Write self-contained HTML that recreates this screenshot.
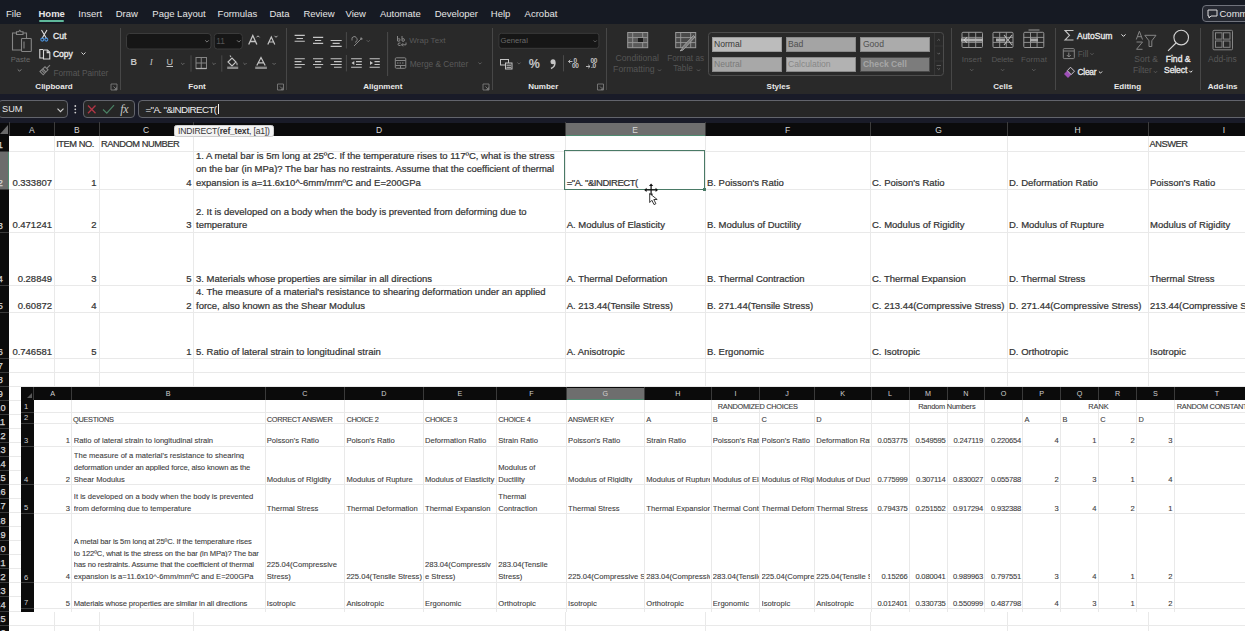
<!DOCTYPE html><html><head><meta charset="utf-8"><style>
html,body{margin:0;padding:0}
body{width:1245px;height:631px;overflow:hidden;position:relative;background:#fff;font-family:"Liberation Sans", sans-serif}
div{box-sizing:border-box}
.t{position:absolute;white-space:nowrap;line-height:1}
.s{-webkit-text-stroke:0.22px currentColor}
.si{-webkit-text-stroke:0.1px currentColor}
</style></head><body>
<div style="position:absolute;left:0px;top:0px;width:1245px;height:24px;background:#161a23"></div>
<div class="t" style="left:6px;top:8.8px;width:15.8px;font-size:9.5px;color:#e6e6e6;font-weight:normal">File</div>
<div class="t" style="left:38.5px;top:8.8px;width:27.5px;font-size:9.5px;color:#e6e6e6;font-weight:bold">Home</div>
<div class="t" style="left:78.3px;top:8.8px;width:24.400000000000006px;font-size:9.5px;color:#e6e6e6;font-weight:normal">Insert</div>
<div class="t" style="left:115.7px;top:8.8px;width:22.89999999999999px;font-size:9.5px;color:#e6e6e6;font-weight:normal">Draw</div>
<div class="t" style="left:152.3px;top:8.8px;width:51.69999999999999px;font-size:9.5px;color:#e6e6e6;font-weight:normal">Page Layout</div>
<div class="t" style="left:217.6px;top:8.8px;width:38.900000000000006px;font-size:9.5px;color:#e6e6e6;font-weight:normal">Formulas</div>
<div class="t" style="left:269.4px;top:8.8px;width:20.80000000000001px;font-size:9.5px;color:#e6e6e6;font-weight:normal">Data</div>
<div class="t" style="left:303.4px;top:8.8px;width:29.900000000000034px;font-size:9.5px;color:#e6e6e6;font-weight:normal">Review</div>
<div class="t" style="left:345.5px;top:8.8px;width:20.80000000000001px;font-size:9.5px;color:#e6e6e6;font-weight:normal">View</div>
<div class="t" style="left:380px;top:8.8px;width:40.80000000000001px;font-size:9.5px;color:#e6e6e6;font-weight:normal">Automate</div>
<div class="t" style="left:434.7px;top:8.8px;width:43.69999999999999px;font-size:9.5px;color:#e6e6e6;font-weight:normal">Developer</div>
<div class="t" style="left:490.8px;top:8.8px;width:20.599999999999966px;font-size:9.5px;color:#e6e6e6;font-weight:normal">Help</div>
<div class="t" style="left:524.6px;top:8.8px;width:34.39999999999998px;font-size:9.5px;color:#e6e6e6;font-weight:normal">Acrobat</div>
<div style="position:absolute;left:38.5px;top:20.3px;width:25.5px;height:1.6px;background:#5fb89a;border-radius:1px"></div>
<div style="position:absolute;left:1202px;top:5px;width:60px;height:17px;background:#262932;border:1px solid #70737c;border-radius:4px"></div>
<svg style="position:absolute;left:1207px;top:9px" width="11" height="10" viewBox="0 0 11 10"><path d="M1 1h9v6H4L2 9V7H1z" fill="none" stroke="#ddd" stroke-width="1"/></svg>
<div class="t" style="left:1219.5px;top:8.5px;font-size:9.5px;color:#e6e6e6;font-weight:normal;">Comm</div>
<div style="position:absolute;left:0px;top:24px;width:1245px;height:70px;background:#292929"></div>
<div style="position:absolute;left:119.5px;top:28px;width:1px;height:62px;background:#474747"></div>
<div style="position:absolute;left:285.8px;top:28px;width:1px;height:62px;background:#474747"></div>
<div style="position:absolute;left:492px;top:28px;width:1px;height:62px;background:#474747"></div>
<div style="position:absolute;left:605.6px;top:28px;width:1px;height:62px;background:#474747"></div>
<div style="position:absolute;left:950.6px;top:28px;width:1px;height:62px;background:#474747"></div>
<div style="position:absolute;left:1054.6px;top:28px;width:1px;height:62px;background:#474747"></div>
<div style="position:absolute;left:1200.4px;top:28px;width:1px;height:62px;background:#474747"></div>
<div class="t" style="left:26.200000000000003px;top:83px;width:55.7px;text-align:center;font-size:8px;color:#e8e8e8;font-weight:bold">Clipboard</div>
<div class="t" style="left:178.7px;top:83px;width:36.70000000000002px;text-align:center;font-size:8px;color:#e8e8e8;font-weight:bold">Font</div>
<div class="t" style="left:354.3px;top:83px;width:57.099999999999966px;text-align:center;font-size:8px;color:#e8e8e8;font-weight:bold">Alignment</div>
<div class="t" style="left:519px;top:83px;width:48.60000000000002px;text-align:center;font-size:8px;color:#e8e8e8;font-weight:bold">Number</div>
<div class="t" style="left:757.9px;top:83px;width:40.89999999999998px;text-align:center;font-size:8px;color:#e8e8e8;font-weight:bold">Styles</div>
<div class="t" style="left:984.4px;top:83px;width:36.89999999999998px;text-align:center;font-size:8px;color:#e8e8e8;font-weight:bold">Cells</div>
<div class="t" style="left:1104.9px;top:83px;width:45.299999999999955px;text-align:center;font-size:8px;color:#e8e8e8;font-weight:bold">Editing</div>
<div class="t" style="left:1198.8px;top:83px;width:47.799999999999955px;text-align:center;font-size:8px;color:#e8e8e8;font-weight:bold">Add-ins</div>
<svg style="position:absolute;left:0;top:0" width="1245" height="94" viewBox="0 0 1245 94"><g fill="none" stroke="#858585" stroke-width="1.1"><path d="M16.5 33H12.5V50H21"/><path d="M23 33H26.5V38"/><path d="M16.5 34.5V31.8H18.5L19.8 30.3L21.1 31.8H23V34.5Z"/><rect x="21.5" y="38.5" width="9.8" height="13" rx="0.8"/><path d="M24 41.5V48.5"/></g><path d="M17.7 69.39999999999999L19.5 71.2L21.3 69.39999999999999" fill="none" stroke="#858585" stroke-width="1"/><g fill="none" stroke-width="1.1"><path d="M41.5 30L46.5 38.5M47 30L42 38.5" stroke="#dcdcdc"/><circle cx="42.3" cy="39.6" r="1.5" stroke="#4a8fd6"/><circle cx="46.3" cy="39.6" r="1.5" stroke="#4a8fd6"/></g><g fill="none" stroke="#d8d8d8" stroke-width="1.1"><path d="M43 49.5H39.8V58H43"/><path d="M43.5 50H47.5L49.8 52.3V59H43.5Z"/><path d="M47.2 50.2V52.6H49.6"/></g><path d="M81.5 52.5L83.5 54.5L85.5 52.5" fill="none" stroke="#d8d8d8" stroke-width="1"/><g fill="none" stroke="#858585" stroke-width="1.1"><path d="M40 71.5L45 66.8L48 69.8L43.2 74.8Z"/><path d="M46.8 68.3L50 65.2"/><path d="M41.5 70.2L44.5 73.2M42.8 69L45.8 72"/></g><g fill="none" stroke="#7a7a7a" stroke-width="0.9"><path d="M111 84H117V90H111Z"/><path d="M113.5 86.5L116.5 89.5M116.5 87.3V89.5H114.3"/></g><g fill="none" stroke="#7a7a7a" stroke-width="0.9"><path d="M277.5 84H283.5V90H277.5Z"/><path d="M280.0 86.5L283.0 89.5M283.0 87.3V89.5H280.8"/></g><g fill="none" stroke="#7a7a7a" stroke-width="0.9"><path d="M483 84H489V90H483Z"/><path d="M485.5 86.5L488.5 89.5M488.5 87.3V89.5H486.3"/></g><g fill="none" stroke="#7a7a7a" stroke-width="0.9"><path d="M597.5 84H603.5V90H597.5Z"/><path d="M600.0 86.5L603.0 89.5M603.0 87.3V89.5H600.8"/></g><rect x="126.5" y="33.5" width="84.5" height="15.5" rx="3" fill="#161616" stroke="#3b3b3b" stroke-width="1"/><path d="M205.2 40.300000000000004L207 42.1L208.8 40.300000000000004" fill="none" stroke="#7a7a7a" stroke-width="1"/><rect x="214.3" y="33.5" width="28" height="15.5" rx="3" fill="#161616" stroke="#3b3b3b" stroke-width="1"/><path d="M237.0 40.300000000000004L238.8 42.1L240.60000000000002 40.300000000000004" fill="none" stroke="#7a7a7a" stroke-width="1"/><g fill="none" stroke="#c4c4c4" stroke-width="1.3"><path d="M248.7 44.5L252.8 35.6L256.9 44.5M250.2 41.5H255.4"/></g><path d="M256.5 37.3L258 35.8L259.5 37.3" fill="none" stroke="#c4c4c4" stroke-width="0.9"/><g fill="none" stroke="#c4c4c4" stroke-width="1.2"><path d="M267.8 44.5L271.3 37L274.8 44.5M269.1 42H273.5"/></g><path d="M274.5 35.8L276 37.3L277.5 35.8" fill="none" stroke="#c4c4c4" stroke-width="0.9"/><path d="M191 55.3V71.7M221.8 55.3V71.7" stroke="#4a4a4a" stroke-width="1"/><path d="M181.20000000000002 63.0L182.8 64.6L184.4 63.0" fill="none" stroke="#6a6a6a" stroke-width="1"/><g fill="none" stroke="#858585" stroke-width="1"><rect x="196" y="57.5" width="10.5" height="11"/><path d="M201.25 57.5V68.5M196 63H206.5"/></g><path d="M196 68.5H206.5" stroke="#b0b0b0" stroke-width="1.3"/><path d="M212.4 63.0L214 64.6L215.6 63.0" fill="none" stroke="#6a6a6a" stroke-width="1"/><g fill="none" stroke="#c4c4c4" stroke-width="1.1"><path d="M228 62L232 58L236 62L232 66Z"/><path d="M231 57L230 55.5"/><path d="M236.5 62.5Q237.8 64.5 236.8 65.3"/></g><rect x="227.2" y="66.6" width="11" height="2.4" fill="#8a8a8a"/><path d="M243.4 63.0L245 64.6L246.6 63.0" fill="none" stroke="#6a6a6a" stroke-width="1"/><g fill="none" stroke="#c4c4c4" stroke-width="1.2"><path d="M256.8 65.5L261 57.5L265.2 65.5M258.3 62.8H263.7"/></g><rect x="255.2" y="66.6" width="11.7" height="2.4" fill="#8a8a8a"/><path d="M272.5 63.0L274.1 64.6L275.70000000000005 63.0" fill="none" stroke="#6a6a6a" stroke-width="1"/><path d="M294.6 35.4H304.8 M296.5 38.5H303 M294.6 41.3H304.8" stroke="#c4c4c4" stroke-width="1.1" fill="none"/><path d="M313 37.4H323.2 M315 40.5H321.2 M313 43.4H323.2" stroke="#c4c4c4" stroke-width="1.1" fill="none"/><path d="M330.6 40.5H341.7 M332.6 43.4H339.7 M330.6 46.4H341.7" stroke="#c4c4c4" stroke-width="1.1" fill="none"/><path d="M346.4 32.1V48.5M346.4 55V71.4" stroke="#4a4a4a" stroke-width="1"/><g fill="none" stroke="#858585" stroke-width="1"><path d="M352 40.5Q351 37 354 36.5Q356 36 356.5 38.5M355 42.5Q358 41 357.2 38.5"/><path d="M354 46L362 38M362 38L360 38.3M362 38L361.7 40"/></g><path d="M366.7 40.2L368.3 41.8L369.90000000000003 40.2" fill="none" stroke="#5c5c5c" stroke-width="1"/><path d="M294.6 58.7H304.8 M294.6 61.6H301.5 M294.6 64.5H304.8 M294.6 67.3H301.5" stroke="#c4c4c4" stroke-width="1.1" fill="none"/><path d="M313 58.7H323.2 M315 61.6H321.2 M313 64.5H323.2 M315 67.3H321.2" stroke="#c4c4c4" stroke-width="1.1" fill="none"/><path d="M330.6 58.7H341.7 M334 61.6H341.7 M330.6 64.5H341.7 M334 67.3H341.7" stroke="#c4c4c4" stroke-width="1.1" fill="none"/><path d="M351.1 58.7H361.8 M351.1 67.3H361.8" stroke="#c4c4c4" stroke-width="1.1" fill="none"/><path d="M356 61.6H361.8 M356 64.5H361.8" stroke="#c4c4c4" stroke-width="1.1" fill="none"/><path d="M351.5 63L354.3 61V65Z" fill="#c4c4c4"/><path d="M369.6 58.7H379.8 M369.6 67.3H379.8" stroke="#c4c4c4" stroke-width="1.1" fill="none"/><path d="M374.5 61.6H379.8 M374.5 64.5H379.8" stroke="#c4c4c4" stroke-width="1.1" fill="none"/><path d="M373 63L370 61V65Z" fill="#c4c4c4"/><g fill="none" stroke="#858585" stroke-width="1"><path d="M397.5 36V41M397.5 39.5Q400 37.5 400 40Q400 42 397.5 41"/><path d="M402 36V41M402 39Q404.5 37.8 404.5 40Q404.5 42 402 41"/><path d="M400.5 43Q398 42.5 398 44.2Q398 46 400.5 45.5"/><path d="M401.5 44.8H406V42.5M401.5 44.8L403 43.3M401.5 44.8L403 46.3"/></g><g fill="none" stroke="#858585" stroke-width="1"><rect x="395.3" y="57.8" width="10.5" height="10.5" rx="1"/><path d="M395.3 60.5H405.8M395.3 65.5H405.8M400.5 65.5V68.3"/><path d="M397 63H404" stroke-dasharray="1.5 1"/></g><path d="M478.4 62.5L480 64.1L481.6 62.5" fill="none" stroke="#5c5c5c" stroke-width="1"/><path d="M387.6 32V76" stroke="#4a4a4a" stroke-width="1"/><rect x="498.9" y="33.3" width="100" height="15" rx="2.5" fill="#161616" stroke="#3b3b3b" stroke-width="1"/><path d="M593.6 40.400000000000006L595.2 42.0L596.8000000000001 40.400000000000006" fill="none" stroke="#5c5c5c" stroke-width="1"/><g fill="none" stroke="#c4c4c4" stroke-width="1"><rect x="500.5" y="59.5" width="8" height="5.5"/><rect x="505.5" y="63" width="6.5" height="6" fill="#292929"/><path d="M506.5 65.2H511M506.5 67.3H511"/></g><path d="M517.4 62.5L519 64.1L520.6 62.5" fill="none" stroke="#5c5c5c" stroke-width="1"/><path d="M563.5 55.2V71.4" stroke="#4a4a4a" stroke-width="1"/><path d="M568.5 61.5H572.5M568.5 61.5L570.3 59.8M568.5 61.5L570.3 63.2" fill="none" stroke="#c4c4c4" stroke-width="0.9"/><path d="M586 66.5H590M590 66.5L588.2 64.8M590 66.5L588.2 68.2" fill="none" stroke="#c4c4c4" stroke-width="0.9"/><rect x="628" y="32.6" width="19.5" height="15" fill="#5a5a5a"/><rect x="627.7" y="32.5" width="20" height="15.2" fill="none" stroke="#9a9a9a" stroke-width="1"/><path d="M627.7 37.6H647.7" stroke="#9a9a9a" stroke-width="0.9"/><path d="M627.7 42.6H647.7" stroke="#9a9a9a" stroke-width="0.9"/><path d="M632.7 32.5V47.7M642.7 32.5V47.7" stroke="#9a9a9a" stroke-width="0.9"/><rect x="638" y="38" width="5" height="4" fill="#1c1c1c"/><rect x="676" y="32.6" width="19.5" height="15" fill="#4a4a4a"/><rect x="675.7" y="32.5" width="20" height="15.2" fill="none" stroke="#9a9a9a" stroke-width="1"/><path d="M675.7 37.6H695.7" stroke="#9a9a9a" stroke-width="0.9"/><path d="M675.7 42.6H695.7" stroke="#9a9a9a" stroke-width="0.9"/><path d="M680.7 32.5V47.7M690.7 32.5V47.7" stroke="#9a9a9a" stroke-width="0.9"/><path d="M695 37L684.5 48.5Q683 51 680 50.8Q682.5 49 683 46.5L693.5 35.5Z" fill="#7a7a7a" stroke="#aaaaaa" stroke-width="0.8"/><path d="M658.0 69.55L659.5 71.05L661.0 69.55" fill="none" stroke="#5c5c5c" stroke-width="1"/><path d="M697.0 69.55L698.5 71.05L700.0 69.55" fill="none" stroke="#5c5c5c" stroke-width="1"/><rect x="708.5" y="32.5" width="235" height="43" rx="3" fill="none" stroke="#4c4c4c" stroke-width="1"/><path d="M934.5 33V75M934.5 46H943M934.5 61H943" stroke="#3a3a3a" stroke-width="0.8"/><path d="M937.4 40.6L938.7 39.3L940 40.6" fill="none" stroke="#666" stroke-width="0.9"/><path d="M937.4000000000001 52.85L938.7 54.15L940.0 52.85" fill="none" stroke="#666" stroke-width="1"/><path d="M936.5 65.5H941" stroke="#666" stroke-width="0.8"/><path d="M937.4000000000001 68.35L938.7 69.65L940.0 68.35" fill="none" stroke="#666" stroke-width="1"/><rect x="962" y="32.3" width="20.5" height="15.2" rx="1" fill="none" stroke="#9a9a9a" stroke-width="1"/><path d="M962 37.4H982.5" stroke="#9a9a9a" stroke-width="0.9"/><path d="M962 42.4H982.5" stroke="#9a9a9a" stroke-width="0.9"/><path d="M968.8 32.3V47.5" stroke="#9a9a9a" stroke-width="0.9"/><path d="M975.7 32.3V47.5" stroke="#9a9a9a" stroke-width="0.9"/><path d="M961 40H983" stroke="#b0b0b0" stroke-width="3"/><path d="M964 40L967 37.5M964 40L967 42.5" stroke="#d0d0d0" stroke-width="1" fill="none"/><rect x="993" y="32.3" width="20" height="15.2" rx="1" fill="none" stroke="#9a9a9a" stroke-width="1"/><path d="M993 37.4H1013" stroke="#9a9a9a" stroke-width="0.9"/><path d="M993 42.4H1013" stroke="#9a9a9a" stroke-width="0.9"/><path d="M999.7 32.3V47.5" stroke="#9a9a9a" stroke-width="0.9"/><path d="M1006.3 32.3V47.5" stroke="#9a9a9a" stroke-width="0.9"/><path d="M996 40H1005" stroke="#aaa" stroke-width="3"/><path d="M1004 35L1012 45M1012 35L1004 45" stroke="#b8b8b8" stroke-width="1.1"/><rect x="1023.8" y="32.3" width="20" height="15.2" rx="1" fill="none" stroke="#9a9a9a" stroke-width="1"/><path d="M1023.8 37.4H1043.8" stroke="#9a9a9a" stroke-width="0.9"/><path d="M1023.8 42.4H1043.8" stroke="#9a9a9a" stroke-width="0.9"/><path d="M1030.5 32.3V47.5" stroke="#9a9a9a" stroke-width="0.9"/><path d="M1037.1 32.3V47.5" stroke="#9a9a9a" stroke-width="0.9"/><path d="M1030 40H1038" stroke="#aaa" stroke-width="3"/><path d="M1028.5 30H1039.5" stroke="#9a9a9a" stroke-width="1"/><path d="M970.1 69.2L971.7 70.8L973.3000000000001 69.2" fill="none" stroke="#5c5c5c" stroke-width="1"/><path d="M1001.0 69.2L1002.6 70.8L1004.2 69.2" fill="none" stroke="#5c5c5c" stroke-width="1"/><path d="M1032.2 69.2L1033.8 70.8L1035.3999999999999 69.2" fill="none" stroke="#5c5c5c" stroke-width="1"/><path d="M1073.5 30.5H1065L1069.5 35.3L1065 40H1073.5" fill="none" stroke="#c4c4c4" stroke-width="1.1"/><path d="M1121.5 34.4L1123.5 36.4L1125.5 34.4" fill="none" stroke="#ececec" stroke-width="1"/><g fill="none" stroke="#858585" stroke-width="1"><rect x="1063.3" y="48.6" width="11" height="10" rx="0.8"/><path d="M1063.3 51H1074.3M1068.8 52.5V57M1066.8 55L1068.8 57L1070.8 55"/></g><path d="M1090.5 53.25L1092 54.75L1093.5 53.25" fill="none" stroke="#5c5c5c" stroke-width="1"/><path d="M1064 74L1070.5 67.2L1074.5 71.2L1068 78Z" fill="#9c4fb6"/><path d="M1067.3 70.6L1070.5 67.2L1074.5 71.2L1071.2 74.6Z" fill="#2e2e2e" stroke="#d0d0d0" stroke-width="0.9"/><path d="M1098.9 71.5L1100.5 73.1L1102.1 71.5" fill="none" stroke="#ececec" stroke-width="1"/><g fill="none" stroke="#858585" stroke-width="1"><path d="M1136.3 39.5L1139.4 31.2L1142.5 39.5M1137.4 36.7H1141.4"/><path d="M1136.5 42H1142.5L1136.5 49.3H1142.5"/><path d="M1144.8 35.3H1156L1151.8 40.8V46.5H1149V40.8Z"/></g><path d="M1154.0 71.25L1155.5 72.75L1157.0 71.25" fill="none" stroke="#5c5c5c" stroke-width="1"/><g fill="none" stroke="#d4d4d4" stroke-width="1.1"><circle cx="1181.2" cy="37.6" r="7.3"/><path d="M1176 43L1168 50.8"/></g><path d="M1189.2 70.7L1190.8 72.3L1192.3999999999999 70.7" fill="none" stroke="#ececec" stroke-width="1"/><g fill="none" stroke="#858585" stroke-width="1"><rect x="1213" y="30.3" width="19.5" height="19.5" rx="1"/><rect x="1215.5" y="32.8" width="6.5" height="6.3"/><rect x="1223.5" y="32.8" width="6.5" height="6.3"/><rect x="1215.5" y="41" width="6.5" height="6.3"/><rect x="1223.5" y="41" width="6.5" height="6.3"/></g></svg>
<div class="t" style="left:10.7px;top:56.17px;font-size:7.6px;color:#6a6a6a;font-weight:normal;">Paste</div>
<div class="t" style="left:53px;top:31.92px;font-size:8.6px;color:#ececec;font-weight:normal;-webkit-text-stroke:0.3px #ececec">Cut</div>
<div class="t" style="left:53px;top:49.72px;font-size:8.6px;color:#ececec;font-weight:normal;-webkit-text-stroke:0.3px #ececec;letter-spacing:-0.1px">Copy</div>
<div class="t" style="left:53.4px;top:68.57px;font-size:8.3px;color:#585858;font-weight:normal;">Format Painter</div>
<div class="t" style="left:216.3px;top:37.27px;font-size:8.3px;color:#555;font-weight:normal;">11</div>
<div class="t" style="left:130.5px;top:58px;font-size:9px;color:#c4c4c4;font-weight:bold">B</div>
<div class="t" style="left:149.8px;top:58px;font-size:9px;color:#c4c4c4;font-style:italic;font-family:'Liberation Serif', serif">I</div>
<div class="t" style="left:166.5px;top:58px;font-size:9px;color:#c4c4c4;text-decoration:underline">U</div>
<div class="t" style="left:409.3px;top:37.34px;font-size:8.1px;color:#5a5a5a;font-weight:normal;">Wrap Text</div>
<div class="t" style="left:409.7px;top:59.57px;font-size:8.3px;color:#5a5a5a;font-weight:normal;">Merge &amp; Center</div>
<div class="t" style="left:500.5px;top:37.38px;font-size:7.7px;color:#6a6a6a;font-weight:normal;">General</div>
<div class="t" style="left:528.8px;top:57.8px;font-size:12.5px;color:#c4c4c4;font-weight:bold;letter-spacing:-0.5px">%</div>
<div class="t" style="left:573.5px;top:57.5px;font-size:6.5px;color:#c4c4c4;font-weight:bold">0</div>
<div class="t" style="left:572px;top:63.3px;font-size:6.5px;color:#c4c4c4;font-weight:bold;letter-spacing:-0.3px">00</div>
<div class="t" style="left:590.5px;top:57.5px;font-size:6.5px;color:#c4c4c4;font-weight:bold;letter-spacing:-0.3px">00</div>
<div class="t" style="left:591px;top:63.3px;font-size:6.5px;color:#c4c4c4;font-weight:bold;letter-spacing:-0.3px">.0</div>
<svg style="position:absolute;left:548px;top:57px" width="10" height="13" viewBox="548 57 10 13"><circle cx="553" cy="61.8" r="2.5" fill="#c4c4c4"/><path d="M554.8 62.5Q555.5 66.5 551 68.5" fill="none" stroke="#c4c4c4" stroke-width="1.6"/></svg>
<div class="t" style="left:615.5px;top:54.14px;font-size:8.7px;color:#555555;font-weight:normal;">Conditional</div>
<div class="t" style="left:613.1px;top:64.84px;font-size:8.7px;color:#555555;font-weight:normal;">Formatting</div>
<div class="t" style="left:667.2px;top:54.56px;font-size:8.2px;color:#555555;font-weight:normal;">Format as</div>
<div class="t" style="left:673.2px;top:65.26px;font-size:8.2px;color:#555555;font-weight:normal;">Table</div>
<div style="position:absolute;left:711.5px;top:36.6px;width:70px;height:15.2px;background:#bcbcbc;border:1px solid #9a9a9a"></div>
<div class="t" style="left:714.0px;top:39.800000000000004px;font-size:8.6px;color:#3a3a3a;font-weight:normal">Normal</div>
<div style="position:absolute;left:785.6px;top:36.6px;width:70px;height:15.2px;background:#a4a4a4;border:1px solid #8a8a8a"></div>
<div class="t" style="left:788.1px;top:39.800000000000004px;font-size:8.6px;color:#505050;font-weight:normal">Bad</div>
<div style="position:absolute;left:860.4px;top:36.6px;width:70px;height:15.2px;background:#ababab;border:1px solid #8a8a8a"></div>
<div class="t" style="left:862.9px;top:39.800000000000004px;font-size:8.6px;color:#505050;font-weight:normal">Good</div>
<div style="position:absolute;left:711.5px;top:56.5px;width:70px;height:15.2px;background:#a8a8a8;border:1px solid #8a8a8a"></div>
<div class="t" style="left:714.0px;top:59.7px;font-size:8.6px;color:#7a7a7a;font-weight:normal">Neutral</div>
<div style="position:absolute;left:785.6px;top:56.5px;width:70px;height:15.2px;background:#b2b2b2;border:1px solid #8a8a8a"></div>
<div class="t" style="left:788.1px;top:59.7px;font-size:8.6px;color:#878787;font-weight:normal">Calculation</div>
<div style="position:absolute;left:860.4px;top:56.5px;width:70px;height:15.2px;background:#7c7c7c;border:1px solid #4a4a4a"></div>
<div class="t" style="left:862.9px;top:59.7px;font-size:8.6px;color:#a6a6a6;font-weight:bold">Check Cell</div>
<div class="t" style="left:961.8px;top:55.63px;font-size:8px;color:#585858;font-weight:normal;">Insert</div>
<div class="t" style="left:991.4px;top:55.63px;font-size:8px;color:#585858;font-weight:normal;letter-spacing:-0.15px">Delete</div>
<div class="t" style="left:1020.9px;top:55.63px;font-size:8px;color:#585858;font-weight:normal;letter-spacing:0.15px">Format</div>
<div class="t" style="left:1077px;top:31.52px;font-size:8.6px;color:#ececec;font-weight:normal;-webkit-text-stroke:0.3px #ececec">AutoSum</div>
<div class="t" style="left:1077.8px;top:49.77px;font-size:8.3px;color:#5a5a5a;font-weight:normal;">Fill</div>
<div class="t" style="left:1077.4px;top:68.49px;font-size:8.4px;color:#ececec;font-weight:normal;-webkit-text-stroke:0.3px #ececec;letter-spacing:-0.2px">Clear</div>
<div class="t" style="left:1134.3px;top:54.80px;font-size:8.5px;color:#585858;font-weight:normal;">Sort &amp;</div>
<div class="t" style="left:1133px;top:65.80px;font-size:8.5px;color:#585858;font-weight:normal;">Filter</div>
<div class="t" style="left:1165.7px;top:54.72px;font-size:8.6px;color:#ececec;font-weight:normal;-webkit-text-stroke:0.3px #ececec">Find &amp;</div>
<div class="t" style="left:1164px;top:66.22px;font-size:8.6px;color:#ececec;font-weight:normal;-webkit-text-stroke:0.3px #ececec;letter-spacing:-0.1px">Select</div>
<div class="t" style="left:1208px;top:54.80px;font-size:8.5px;color:#585858;font-weight:normal;">Add-ins</div>
<div style="position:absolute;left:0px;top:94px;width:1245px;height:29px;background:#191b28"></div>
<div style="position:absolute;left:-2px;top:100.3px;width:70.3px;height:18px;background:#262626;border:1px solid #62646c;border-radius:4px"></div>
<div class="t" style="left:2px;top:105.3px;font-size:9.2px;color:#e8e8e8;font-weight:normal;">SUM</div>
<div style="position:absolute;left:82.5px;top:100.3px;width:52px;height:18px;background:#262626;border:1px solid #62646c;border-radius:4px"></div>
<div style="position:absolute;left:137.5px;top:100.3px;width:1120px;height:18px;background:#262626;border:1px solid #62646c;border-radius:4px"></div>
<svg style="position:absolute;left:0;top:94px" width="240" height="28" viewBox="0 94 240 28"><path d="M57.5 108.7L60.5 111.7L63.5 108.7" fill="none" stroke="#d0d0d0" stroke-width="1.1"/><circle cx="75.3" cy="106" r="0.9" fill="#d0d0d0"/><circle cx="75.3" cy="109.3" r="0.9" fill="#d0d0d0"/><circle cx="75.3" cy="112.6" r="0.9" fill="#d0d0d0"/><path d="M88 105.5L95.5 113.2M95.5 105.5L88 113.2" stroke="#b03646" stroke-width="1.3"/><path d="M103 109.5L106.8 113.2L114 105.2" fill="none" stroke="#4a8264" stroke-width="1.2"/></svg>
<div class="t" style="left:120.3px;top:103.3px;font-size:12px;color:#c8c8c8;font-style:italic;letter-spacing:-0.3px;font-family:'Liberation Serif', serif">fx</div>
<div class="t" style="left:145.4px;top:104.3px;font-size:9.8px;color:#f0f0f0;letter-spacing:-0.6px">=&quot;A. &quot;&amp;INDIRECT(<span style="display:inline-block;width:1px;height:10px;background:#f0f0f0;margin-left:1.5px;vertical-align:-1px"></span></div>
<div style="position:absolute;left:0px;top:122.5px;width:1245px;height:13.5px;background:#0b0b0c"></div>
<div class="t" style="left:9px;top:125.5px;width:45.6px;text-align:center;font-size:8.5px;color:#d8d8d8">A</div>
<div class="t" style="left:54.6px;top:125.5px;width:44.4px;text-align:center;font-size:8.5px;color:#d8d8d8">B</div>
<div class="t" style="left:99px;top:125.5px;width:94px;text-align:center;font-size:8.5px;color:#d8d8d8">C</div>
<div class="t" style="left:193px;top:125.5px;width:372px;text-align:center;font-size:8.5px;color:#d8d8d8">D</div>
<div style="position:absolute;left:565px;top:122.5px;width:140px;height:13.5px;background:#6e6e6e;border-bottom:1.5px solid #4f8a70"></div>
<div class="t" style="left:565px;top:125.5px;width:140px;text-align:center;font-size:8.5px;color:#d8d8d8">E</div>
<div class="t" style="left:705px;top:125.5px;width:165px;text-align:center;font-size:8.5px;color:#d8d8d8">F</div>
<div class="t" style="left:870px;top:125.5px;width:137px;text-align:center;font-size:8.5px;color:#d8d8d8">G</div>
<div class="t" style="left:1007px;top:125.5px;width:141px;text-align:center;font-size:8.5px;color:#d8d8d8">H</div>
<div class="t" style="left:1148px;top:125.5px;width:152px;text-align:center;font-size:8.5px;color:#d8d8d8">I</div>
<div style="position:absolute;left:54.1px;top:122px;width:1px;height:14px;background:#3c3c3c"></div>
<div style="position:absolute;left:98.5px;top:122px;width:1px;height:14px;background:#3c3c3c"></div>
<div style="position:absolute;left:192.5px;top:122px;width:1px;height:14px;background:#3c3c3c"></div>
<div style="position:absolute;left:564.5px;top:122px;width:1px;height:14px;background:#3c3c3c"></div>
<div style="position:absolute;left:704.5px;top:122px;width:1px;height:14px;background:#3c3c3c"></div>
<div style="position:absolute;left:869.5px;top:122px;width:1px;height:14px;background:#3c3c3c"></div>
<div style="position:absolute;left:1006.5px;top:122px;width:1px;height:14px;background:#3c3c3c"></div>
<div style="position:absolute;left:1147.5px;top:122px;width:1px;height:14px;background:#3c3c3c"></div>
<svg style="position:absolute;left:0;top:124px" width="9" height="12"><path d="M8 1V10H0z" fill="#6a6a6a"/></svg>
<div style="position:absolute;left:8.5px;top:122px;width:1px;height:14px;background:#3c3c3c"></div>
<div style="position:absolute;left:0px;top:136px;width:9px;height:495px;background:#0b0b0b"></div>
<div style="position:absolute;left:0px;top:151px;width:9px;height:38.5px;background:#6c6c6c;border-right:1.5px solid #4f8a70"></div>
<div class="t" style="left:-19.6px;width:40px;text-align:center;top:140.8px;font-size:9.2px;color:#d4d4d4;-webkit-text-stroke:0.25px #d4d4d4">1</div>
<div style="position:absolute;left:0px;top:150.5px;width:9px;height:1px;background:#3a3a3a"></div>
<div class="t" style="left:-19.6px;width:40px;text-align:center;top:179.3px;font-size:9.2px;color:#d4d4d4;-webkit-text-stroke:0.25px #d4d4d4">2</div>
<div style="position:absolute;left:0px;top:189.0px;width:9px;height:1px;background:#3a3a3a"></div>
<div class="t" style="left:-19.6px;width:40px;text-align:center;top:221.8px;font-size:9.2px;color:#d4d4d4;-webkit-text-stroke:0.25px #d4d4d4">3</div>
<div style="position:absolute;left:0px;top:231.5px;width:9px;height:1px;background:#3a3a3a"></div>
<div class="t" style="left:-19.6px;width:40px;text-align:center;top:275.3px;font-size:9.2px;color:#d4d4d4;-webkit-text-stroke:0.25px #d4d4d4">4</div>
<div style="position:absolute;left:0px;top:285.0px;width:9px;height:1px;background:#3a3a3a"></div>
<div class="t" style="left:-19.6px;width:40px;text-align:center;top:302.3px;font-size:9.2px;color:#d4d4d4;-webkit-text-stroke:0.25px #d4d4d4">5</div>
<div style="position:absolute;left:0px;top:312.0px;width:9px;height:1px;background:#3a3a3a"></div>
<div class="t" style="left:-19.6px;width:40px;text-align:center;top:348.3px;font-size:9.2px;color:#d4d4d4;-webkit-text-stroke:0.25px #d4d4d4">6</div>
<div style="position:absolute;left:0px;top:358.0px;width:9px;height:1px;background:#3a3a3a"></div>
<div class="t" style="left:-19.6px;width:40px;text-align:center;top:362.0px;font-size:9.2px;color:#d4d4d4;-webkit-text-stroke:0.25px #d4d4d4">7</div>
<div style="position:absolute;left:0px;top:371.7px;width:9px;height:1px;background:#3a3a3a"></div>
<div class="t" style="left:-19.6px;width:40px;text-align:center;top:376.0px;font-size:9.2px;color:#d4d4d4;-webkit-text-stroke:0.25px #d4d4d4">8</div>
<div style="position:absolute;left:0px;top:385.7px;width:9px;height:1px;background:#3a3a3a"></div>
<div class="t" style="left:-19.6px;width:40px;text-align:center;top:390.05px;font-size:9.2px;color:#d4d4d4;-webkit-text-stroke:0.25px #d4d4d4">9</div>
<div style="position:absolute;left:0px;top:399.75px;width:9px;height:1px;background:#3a3a3a"></div>
<div class="t" style="left:-19.6px;width:40px;text-align:center;top:404.1px;font-size:9.2px;color:#d4d4d4;-webkit-text-stroke:0.25px #d4d4d4">10</div>
<div style="position:absolute;left:0px;top:413.8px;width:9px;height:1px;background:#3a3a3a"></div>
<div class="t" style="left:-19.6px;width:40px;text-align:center;top:418.15000000000003px;font-size:9.2px;color:#d4d4d4;-webkit-text-stroke:0.25px #d4d4d4">11</div>
<div style="position:absolute;left:0px;top:427.85px;width:9px;height:1px;background:#3a3a3a"></div>
<div class="t" style="left:-19.6px;width:40px;text-align:center;top:432.2px;font-size:9.2px;color:#d4d4d4;-webkit-text-stroke:0.25px #d4d4d4">12</div>
<div style="position:absolute;left:0px;top:441.9px;width:9px;height:1px;background:#3a3a3a"></div>
<div class="t" style="left:-19.6px;width:40px;text-align:center;top:446.25px;font-size:9.2px;color:#d4d4d4;-webkit-text-stroke:0.25px #d4d4d4">13</div>
<div style="position:absolute;left:0px;top:455.95px;width:9px;height:1px;background:#3a3a3a"></div>
<div class="t" style="left:-19.6px;width:40px;text-align:center;top:460.3px;font-size:9.2px;color:#d4d4d4;-webkit-text-stroke:0.25px #d4d4d4">14</div>
<div style="position:absolute;left:0px;top:470.0px;width:9px;height:1px;background:#3a3a3a"></div>
<div class="t" style="left:-19.6px;width:40px;text-align:center;top:474.35px;font-size:9.2px;color:#d4d4d4;-webkit-text-stroke:0.25px #d4d4d4">15</div>
<div style="position:absolute;left:0px;top:484.05px;width:9px;height:1px;background:#3a3a3a"></div>
<div class="t" style="left:-19.6px;width:40px;text-align:center;top:488.40000000000003px;font-size:9.2px;color:#d4d4d4;-webkit-text-stroke:0.25px #d4d4d4">16</div>
<div style="position:absolute;left:0px;top:498.1px;width:9px;height:1px;background:#3a3a3a"></div>
<div class="t" style="left:-19.6px;width:40px;text-align:center;top:502.45px;font-size:9.2px;color:#d4d4d4;-webkit-text-stroke:0.25px #d4d4d4">17</div>
<div style="position:absolute;left:0px;top:512.15px;width:9px;height:1px;background:#3a3a3a"></div>
<div class="t" style="left:-19.6px;width:40px;text-align:center;top:516.5px;font-size:9.2px;color:#d4d4d4;-webkit-text-stroke:0.25px #d4d4d4">18</div>
<div style="position:absolute;left:0px;top:526.2px;width:9px;height:1px;background:#3a3a3a"></div>
<div class="t" style="left:-19.6px;width:40px;text-align:center;top:530.55px;font-size:9.2px;color:#d4d4d4;-webkit-text-stroke:0.25px #d4d4d4">19</div>
<div style="position:absolute;left:0px;top:540.25px;width:9px;height:1px;background:#3a3a3a"></div>
<div class="t" style="left:-19.6px;width:40px;text-align:center;top:544.5999999999999px;font-size:9.2px;color:#d4d4d4;-webkit-text-stroke:0.25px #d4d4d4">20</div>
<div style="position:absolute;left:0px;top:554.3px;width:9px;height:1px;background:#3a3a3a"></div>
<div class="t" style="left:-19.6px;width:40px;text-align:center;top:558.65px;font-size:9.2px;color:#d4d4d4;-webkit-text-stroke:0.25px #d4d4d4">21</div>
<div style="position:absolute;left:0px;top:568.35px;width:9px;height:1px;background:#3a3a3a"></div>
<div class="t" style="left:-19.6px;width:40px;text-align:center;top:572.6999999999999px;font-size:9.2px;color:#d4d4d4;-webkit-text-stroke:0.25px #d4d4d4">22</div>
<div style="position:absolute;left:0px;top:582.4px;width:9px;height:1px;background:#3a3a3a"></div>
<div class="t" style="left:-19.6px;width:40px;text-align:center;top:586.75px;font-size:9.2px;color:#d4d4d4;-webkit-text-stroke:0.25px #d4d4d4">23</div>
<div style="position:absolute;left:0px;top:596.45px;width:9px;height:1px;background:#3a3a3a"></div>
<div class="t" style="left:-19.6px;width:40px;text-align:center;top:600.8px;font-size:9.2px;color:#d4d4d4;-webkit-text-stroke:0.25px #d4d4d4">24</div>
<div style="position:absolute;left:0px;top:610.5px;width:9px;height:1px;background:#3a3a3a"></div>
<div class="t" style="left:-19.6px;width:40px;text-align:center;top:614.8499999999999px;font-size:9.2px;color:#d4d4d4;-webkit-text-stroke:0.25px #d4d4d4">25</div>
<div style="position:absolute;left:0px;top:624.55px;width:9px;height:1px;background:#3a3a3a"></div>
<div class="t" style="left:-19.6px;width:40px;text-align:center;top:628.9px;font-size:9.2px;color:#d4d4d4;-webkit-text-stroke:0.25px #d4d4d4">26</div>
<div style="position:absolute;left:0px;top:638.6px;width:9px;height:1px;background:#3a3a3a"></div>
<div style="position:absolute;left:9px;top:150.5px;width:1236px;height:1px;background:#e9e9e9"></div>
<div style="position:absolute;left:9px;top:189.0px;width:1236px;height:1px;background:#e9e9e9"></div>
<div style="position:absolute;left:9px;top:231.5px;width:1236px;height:1px;background:#e9e9e9"></div>
<div style="position:absolute;left:9px;top:285.0px;width:1236px;height:1px;background:#e9e9e9"></div>
<div style="position:absolute;left:9px;top:312.0px;width:1236px;height:1px;background:#e9e9e9"></div>
<div style="position:absolute;left:9px;top:358.0px;width:1236px;height:1px;background:#e9e9e9"></div>
<div style="position:absolute;left:9px;top:371.7px;width:1236px;height:1px;background:#e9e9e9"></div>
<div style="position:absolute;left:9px;top:385.7px;width:1236px;height:1px;background:#e9e9e9"></div>
<div style="position:absolute;left:9px;top:399.75px;width:1236px;height:1px;background:#e9e9e9"></div>
<div style="position:absolute;left:9px;top:413.8px;width:1236px;height:1px;background:#e9e9e9"></div>
<div style="position:absolute;left:9px;top:427.85px;width:1236px;height:1px;background:#e9e9e9"></div>
<div style="position:absolute;left:9px;top:441.9px;width:1236px;height:1px;background:#e9e9e9"></div>
<div style="position:absolute;left:9px;top:455.95px;width:1236px;height:1px;background:#e9e9e9"></div>
<div style="position:absolute;left:9px;top:470.0px;width:1236px;height:1px;background:#e9e9e9"></div>
<div style="position:absolute;left:9px;top:484.05px;width:1236px;height:1px;background:#e9e9e9"></div>
<div style="position:absolute;left:9px;top:498.1px;width:1236px;height:1px;background:#e9e9e9"></div>
<div style="position:absolute;left:9px;top:512.15px;width:1236px;height:1px;background:#e9e9e9"></div>
<div style="position:absolute;left:9px;top:526.2px;width:1236px;height:1px;background:#e9e9e9"></div>
<div style="position:absolute;left:9px;top:540.25px;width:1236px;height:1px;background:#e9e9e9"></div>
<div style="position:absolute;left:9px;top:554.3px;width:1236px;height:1px;background:#e9e9e9"></div>
<div style="position:absolute;left:9px;top:568.35px;width:1236px;height:1px;background:#e9e9e9"></div>
<div style="position:absolute;left:9px;top:582.4px;width:1236px;height:1px;background:#e9e9e9"></div>
<div style="position:absolute;left:9px;top:596.45px;width:1236px;height:1px;background:#e9e9e9"></div>
<div style="position:absolute;left:9px;top:610.5px;width:1236px;height:1px;background:#e9e9e9"></div>
<div style="position:absolute;left:9px;top:624.55px;width:1236px;height:1px;background:#e9e9e9"></div>
<div style="position:absolute;left:9px;top:638.6px;width:1236px;height:1px;background:#e9e9e9"></div>
<div style="position:absolute;left:54.1px;top:136px;width:1px;height:495px;background:#e9e9e9"></div>
<div style="position:absolute;left:98.5px;top:136px;width:1px;height:495px;background:#e9e9e9"></div>
<div style="position:absolute;left:192.5px;top:136px;width:1px;height:495px;background:#e9e9e9"></div>
<div style="position:absolute;left:564.5px;top:136px;width:1px;height:495px;background:#e9e9e9"></div>
<div style="position:absolute;left:704.5px;top:136px;width:1px;height:495px;background:#e9e9e9"></div>
<div style="position:absolute;left:869.5px;top:136px;width:1px;height:495px;background:#e9e9e9"></div>
<div style="position:absolute;left:1006.5px;top:136px;width:1px;height:495px;background:#e9e9e9"></div>
<div style="position:absolute;left:1147.5px;top:136px;width:1px;height:495px;background:#e9e9e9"></div>
<div class="t s" style="left:56.2px;top:140.13px;font-size:9.3px;color:#333;letter-spacing:-0.45px">ITEM NO.</div>
<div class="t s" style="left:100.9px;top:140.13px;font-size:9.3px;color:#333;letter-spacing:-0.45px">RANDOM NUMBER</div>
<div class="t s" style="left:1149.5px;top:140.13px;font-size:9.3px;color:#333;letter-spacing:-0.45px">ANSWER</div>
<div class="t s" style="right:1193px;top:177.96px;font-size:9.5px;color:#333;">0.333807</div>
<div class="t s" style="right:1148.5px;top:177.96px;font-size:9.5px;color:#333;">1</div>
<div class="t s" style="right:1053.5px;top:177.96px;font-size:9.5px;color:#333;">4</div>
<div class="t s" style="left:196px;top:150.76px;font-size:9.5px;color:#333;">1. A metal bar is 5m long at 25ºC. If the temperature rises to 117ºC, what is the stress</div>
<div class="t s" style="left:196px;top:164.36px;font-size:9.5px;color:#333;">on the bar (in MPa)? The bar has no restraints. Assume that the coefficient of thermal</div>
<div class="t s" style="left:196px;top:177.96px;font-size:9.5px;color:#333;">expansion is a=11.6x10^-6mm/mmºC and E=200GPa</div>
<div class="t s" style="left:566.7px;top:177.96px;font-size:9.5px;color:#333;letter-spacing:-0.45px">="A. "&amp;INDIRECT(</div>
<div class="t s" style="left:707px;top:177.96px;font-size:9.5px;color:#333;">B. Poisson's Ratio</div>
<div class="t s" style="left:872px;top:177.96px;font-size:9.5px;color:#333;">C. Poison's Ratio</div>
<div class="t s" style="left:1009px;top:177.96px;font-size:9.5px;color:#333;">D. Deformation Ratio</div>
<div class="t s" style="left:1150px;top:177.96px;font-size:9.5px;color:#333;">Poisson's Ratio</div>
<div class="t s" style="right:1193px;top:220.26px;font-size:9.5px;color:#333;">0.471241</div>
<div class="t s" style="right:1148.5px;top:220.26px;font-size:9.5px;color:#333;">2</div>
<div class="t s" style="right:1053.5px;top:220.26px;font-size:9.5px;color:#333;">3</div>
<div class="t s" style="left:196px;top:206.66px;font-size:9.5px;color:#333;">2. It is developed on a body when the body is prevented from deforming due to</div>
<div class="t s" style="left:196px;top:220.26px;font-size:9.5px;color:#333;">temperature</div>
<div class="t s" style="left:566.7px;top:220.26px;font-size:9.5px;color:#333;">A. Modulus of Elasticity</div>
<div class="t s" style="left:707px;top:220.26px;font-size:9.5px;color:#333;">B. Modulus of Ductility</div>
<div class="t s" style="left:872px;top:220.26px;font-size:9.5px;color:#333;">C. Modulus of Rigidity</div>
<div class="t s" style="left:1009px;top:220.26px;font-size:9.5px;color:#333;">D. Modulus of Rupture</div>
<div class="t s" style="left:1150px;top:220.26px;font-size:9.5px;color:#333;">Modulus of Rigidity</div>
<div class="t s" style="right:1193px;top:273.96px;font-size:9.5px;color:#333;">0.28849</div>
<div class="t s" style="right:1148.5px;top:273.96px;font-size:9.5px;color:#333;">3</div>
<div class="t s" style="right:1053.5px;top:273.96px;font-size:9.5px;color:#333;">5</div>
<div class="t s" style="left:196px;top:273.96px;font-size:9.5px;color:#333;">3. Materials whose properties are similar in all directions</div>
<div class="t s" style="left:566.7px;top:273.96px;font-size:9.5px;color:#333;">A. Thermal Deformation</div>
<div class="t s" style="left:707px;top:273.96px;font-size:9.5px;color:#333;">B. Thermal Contraction</div>
<div class="t s" style="left:872px;top:273.96px;font-size:9.5px;color:#333;">C. Thermal Expansion</div>
<div class="t s" style="left:1009px;top:273.96px;font-size:9.5px;color:#333;">D. Thermal Stress</div>
<div class="t s" style="left:1150px;top:273.96px;font-size:9.5px;color:#333;">Thermal Stress</div>
<div class="t s" style="right:1193px;top:300.96px;font-size:9.5px;color:#333;">0.60872</div>
<div class="t s" style="right:1148.5px;top:300.96px;font-size:9.5px;color:#333;">4</div>
<div class="t s" style="right:1053.5px;top:300.96px;font-size:9.5px;color:#333;">2</div>
<div class="t s" style="left:196px;top:287.36px;font-size:9.5px;color:#333;">4. The measure of a material's resistance to shearing deformation under an applied</div>
<div class="t s" style="left:196px;top:300.96px;font-size:9.5px;color:#333;">force, also known as the Shear Modulus</div>
<div class="t s" style="left:566.7px;top:300.96px;font-size:9.5px;color:#333;">A. 213.44(Tensile Stress)</div>
<div class="t s" style="left:707px;top:300.96px;font-size:9.5px;color:#333;">B. 271.44(Tensile Stress)</div>
<div class="t s" style="left:872px;top:300.96px;font-size:9.5px;color:#333;">C. 213.44(Compressive Stress)</div>
<div class="t s" style="left:1009px;top:300.96px;font-size:9.5px;color:#333;">D. 271.44(Compressive Stress)</div>
<div class="t s" style="left:1150px;top:300.96px;font-size:9.5px;color:#333;">213.44(Compressive Stress)</div>
<div class="t s" style="right:1193px;top:346.96px;font-size:9.5px;color:#333;">0.746581</div>
<div class="t s" style="right:1148.5px;top:346.96px;font-size:9.5px;color:#333;">5</div>
<div class="t s" style="right:1053.5px;top:346.96px;font-size:9.5px;color:#333;">1</div>
<div class="t s" style="left:196px;top:346.96px;font-size:9.5px;color:#333;">5. Ratio of lateral strain to longitudinal strain</div>
<div class="t s" style="left:566.7px;top:346.96px;font-size:9.5px;color:#333;">A. Anisotropic</div>
<div class="t s" style="left:707px;top:346.96px;font-size:9.5px;color:#333;">B. Ergonomic</div>
<div class="t s" style="left:872px;top:346.96px;font-size:9.5px;color:#333;">C. Isotropic</div>
<div class="t s" style="left:1009px;top:346.96px;font-size:9.5px;color:#333;">D. Orthotropic</div>
<div class="t s" style="left:1150px;top:346.96px;font-size:9.5px;color:#333;">Isotropic</div>
<div style="position:absolute;left:564.3px;top:150.2px;width:141px;height:40px;border:1.8px solid #4a7a66"></div>
<div style="position:absolute;left:703px;top:188px;width:3px;height:3px;background:#4a7a66"></div>
<div style="position:absolute;left:174.2px;top:125.2px;width:99.7px;height:11.6px;background:#f3f3f3;border:1px solid #cfcfcf;border-radius:2.5px"></div>
<div class="t" style="left:178px;top:126.6px;font-size:8.6px;color:#333;letter-spacing:-0.2px">INDIRECT(<b>ref_text</b>, [a1])</div>
<svg style="position:absolute;left:640px;top:180px" width="25" height="28" viewBox="640 180 25 28"><path d="M651.1 183.6L653.2 186H649Z M651.1 196.2L653.2 193.8H649Z M644.2 189.9L646.6 187.8V192Z M658 189.9L655.6 187.8V192Z" fill="#111"/><path d="M651.1 185V195M645.5 189.9H656.7" stroke="#111" stroke-width="1.2"/><path d="M649.7 193.5V202.5L651.9 200.3L654 204.6L655.9 203.7L653.8 199.5H657.2Z" fill="#fff" stroke="#222" stroke-width="0.9"/></svg>
<div style="position:absolute;left:20.5px;top:387px;width:1224.5px;height:225.39999999999998px;background:#fff"></div>
<div style="position:absolute;left:20.5px;top:387px;width:1224.5px;height:13px;background:#0b0b0b"></div>
<div style="position:absolute;left:20.5px;top:387px;width:13.3px;height:225.39999999999998px;background:#0b0b0b"></div>
<svg style="position:absolute;left:20.5px;top:387px" width="13" height="13"><path d="M11 6V11H6z" fill="#5a5a5a"/></svg>
<div class="t" style="left:33.8px;top:390px;width:37.5px;text-align:center;font-size:7.2px;color:#d0d0d0">A</div>
<div class="t" style="left:71.3px;top:390px;width:193.7px;text-align:center;font-size:7.2px;color:#d0d0d0">B</div>
<div class="t" style="left:265px;top:390px;width:79.60000000000002px;text-align:center;font-size:7.2px;color:#d0d0d0">C</div>
<div class="t" style="left:344.6px;top:390px;width:78.59999999999997px;text-align:center;font-size:7.2px;color:#d0d0d0">D</div>
<div class="t" style="left:423.2px;top:390px;width:73.30000000000001px;text-align:center;font-size:7.2px;color:#d0d0d0">E</div>
<div class="t" style="left:496.5px;top:390px;width:69.79999999999995px;text-align:center;font-size:7.2px;color:#d0d0d0">F</div>
<div style="position:absolute;left:566.3px;top:387.5px;width:78.20000000000005px;height:12.5px;background:#6e6e6e;border-bottom:1.2px solid #4f8a70"></div>
<div class="t" style="left:566.3px;top:390px;width:78.20000000000005px;text-align:center;font-size:7.2px;color:#d0d0d0">G</div>
<div class="t" style="left:644.5px;top:390px;width:66.5px;text-align:center;font-size:7.2px;color:#d0d0d0">H</div>
<div class="t" style="left:711px;top:390px;width:48.799999999999955px;text-align:center;font-size:7.2px;color:#d0d0d0">I</div>
<div class="t" style="left:759.8px;top:390px;width:54.700000000000045px;text-align:center;font-size:7.2px;color:#d0d0d0">J</div>
<div class="t" style="left:814.5px;top:390px;width:56.5px;text-align:center;font-size:7.2px;color:#d0d0d0">K</div>
<div class="t" style="left:871px;top:390px;width:38px;text-align:center;font-size:7.2px;color:#d0d0d0">L</div>
<div class="t" style="left:909px;top:390px;width:38px;text-align:center;font-size:7.2px;color:#d0d0d0">M</div>
<div class="t" style="left:947px;top:390px;width:37.5px;text-align:center;font-size:7.2px;color:#d0d0d0">N</div>
<div class="t" style="left:984.5px;top:390px;width:38.10000000000002px;text-align:center;font-size:7.2px;color:#d0d0d0">O</div>
<div class="t" style="left:1022.6px;top:390px;width:38.10000000000002px;text-align:center;font-size:7.2px;color:#d0d0d0">P</div>
<div class="t" style="left:1060.7px;top:390px;width:37.799999999999955px;text-align:center;font-size:7.2px;color:#d0d0d0">Q</div>
<div class="t" style="left:1098.5px;top:390px;width:38.09999999999991px;text-align:center;font-size:7.2px;color:#d0d0d0">R</div>
<div class="t" style="left:1136.6px;top:390px;width:37.80000000000018px;text-align:center;font-size:7.2px;color:#d0d0d0">S</div>
<div class="t" style="left:1174.4px;top:390px;width:85px;text-align:center;font-size:7.2px;color:#d0d0d0">T</div>
<div style="position:absolute;left:33.3px;top:387px;width:1px;height:13px;background:#3a3a3a"></div>
<div style="position:absolute;left:70.8px;top:387px;width:1px;height:13px;background:#3a3a3a"></div>
<div style="position:absolute;left:264.5px;top:387px;width:1px;height:13px;background:#3a3a3a"></div>
<div style="position:absolute;left:344.1px;top:387px;width:1px;height:13px;background:#3a3a3a"></div>
<div style="position:absolute;left:422.7px;top:387px;width:1px;height:13px;background:#3a3a3a"></div>
<div style="position:absolute;left:496.0px;top:387px;width:1px;height:13px;background:#3a3a3a"></div>
<div style="position:absolute;left:565.8px;top:387px;width:1px;height:13px;background:#3a3a3a"></div>
<div style="position:absolute;left:644.0px;top:387px;width:1px;height:13px;background:#3a3a3a"></div>
<div style="position:absolute;left:710.5px;top:387px;width:1px;height:13px;background:#3a3a3a"></div>
<div style="position:absolute;left:759.3px;top:387px;width:1px;height:13px;background:#3a3a3a"></div>
<div style="position:absolute;left:814.0px;top:387px;width:1px;height:13px;background:#3a3a3a"></div>
<div style="position:absolute;left:870.5px;top:387px;width:1px;height:13px;background:#3a3a3a"></div>
<div style="position:absolute;left:908.5px;top:387px;width:1px;height:13px;background:#3a3a3a"></div>
<div style="position:absolute;left:946.5px;top:387px;width:1px;height:13px;background:#3a3a3a"></div>
<div style="position:absolute;left:984.0px;top:387px;width:1px;height:13px;background:#3a3a3a"></div>
<div style="position:absolute;left:1022.1px;top:387px;width:1px;height:13px;background:#3a3a3a"></div>
<div style="position:absolute;left:1060.2px;top:387px;width:1px;height:13px;background:#3a3a3a"></div>
<div style="position:absolute;left:1098.0px;top:387px;width:1px;height:13px;background:#3a3a3a"></div>
<div style="position:absolute;left:1136.1px;top:387px;width:1px;height:13px;background:#3a3a3a"></div>
<div style="position:absolute;left:1173.9px;top:387px;width:1px;height:13px;background:#3a3a3a"></div>
<div class="t" style="left:24.1px;top:402.90000000000003px;font-size:7.6px;color:#d0d0d0">1</div>
<div style="position:absolute;left:20.5px;top:411.6px;width:13.3px;height:1px;background:#3a3a3a"></div>
<div class="t" style="left:24.1px;top:414.40000000000003px;font-size:7.6px;color:#d0d0d0">2</div>
<div style="position:absolute;left:20.5px;top:423.1px;width:13.3px;height:1px;background:#3a3a3a"></div>
<div class="t" style="left:24.1px;top:437.0px;font-size:7.6px;color:#d0d0d0">3</div>
<div style="position:absolute;left:20.5px;top:445.7px;width:13.3px;height:1px;background:#3a3a3a"></div>
<div class="t" style="left:24.1px;top:475.5px;font-size:7.6px;color:#d0d0d0">4</div>
<div style="position:absolute;left:20.5px;top:484.2px;width:13.3px;height:1px;background:#3a3a3a"></div>
<div class="t" style="left:24.1px;top:504.09999999999997px;font-size:7.6px;color:#d0d0d0">5</div>
<div style="position:absolute;left:20.5px;top:512.8px;width:13.3px;height:1px;background:#3a3a3a"></div>
<div class="t" style="left:24.1px;top:573.5999999999999px;font-size:7.6px;color:#d0d0d0">6</div>
<div style="position:absolute;left:20.5px;top:582.3px;width:13.3px;height:1px;background:#3a3a3a"></div>
<div class="t" style="left:24.1px;top:599.4px;font-size:7.6px;color:#d0d0d0">7</div>
<div style="position:absolute;left:20.5px;top:608.1px;width:13.3px;height:1px;background:#3a3a3a"></div>
<div style="position:absolute;left:33.8px;top:411.6px;width:1211.2px;height:1px;background:#e9e9e9"></div>
<div style="position:absolute;left:33.8px;top:423.1px;width:1211.2px;height:1px;background:#e9e9e9"></div>
<div style="position:absolute;left:33.8px;top:445.7px;width:1211.2px;height:1px;background:#e9e9e9"></div>
<div style="position:absolute;left:33.8px;top:484.2px;width:1211.2px;height:1px;background:#e9e9e9"></div>
<div style="position:absolute;left:33.8px;top:512.8px;width:1211.2px;height:1px;background:#e9e9e9"></div>
<div style="position:absolute;left:33.8px;top:582.3px;width:1211.2px;height:1px;background:#e9e9e9"></div>
<div style="position:absolute;left:33.8px;top:608.1px;width:1211.2px;height:1px;background:#e9e9e9"></div>
<div style="position:absolute;left:70.8px;top:400px;width:1px;height:212.39999999999998px;background:#e9e9e9"></div>
<div style="position:absolute;left:264.5px;top:400px;width:1px;height:212.39999999999998px;background:#e9e9e9"></div>
<div style="position:absolute;left:344.1px;top:400px;width:1px;height:212.39999999999998px;background:#e9e9e9"></div>
<div style="position:absolute;left:422.7px;top:400px;width:1px;height:212.39999999999998px;background:#e9e9e9"></div>
<div style="position:absolute;left:496.0px;top:400px;width:1px;height:212.39999999999998px;background:#e9e9e9"></div>
<div style="position:absolute;left:565.8px;top:400px;width:1px;height:212.39999999999998px;background:#e9e9e9"></div>
<div style="position:absolute;left:644.0px;top:400px;width:1px;height:212.39999999999998px;background:#e9e9e9"></div>
<div style="position:absolute;left:710.5px;top:400px;width:1px;height:212.39999999999998px;background:#e9e9e9"></div>
<div style="position:absolute;left:759.3px;top:400px;width:1px;height:212.39999999999998px;background:#e9e9e9"></div>
<div style="position:absolute;left:814.0px;top:400px;width:1px;height:212.39999999999998px;background:#e9e9e9"></div>
<div style="position:absolute;left:870.5px;top:400px;width:1px;height:212.39999999999998px;background:#e9e9e9"></div>
<div style="position:absolute;left:908.5px;top:400px;width:1px;height:212.39999999999998px;background:#e9e9e9"></div>
<div style="position:absolute;left:946.5px;top:400px;width:1px;height:212.39999999999998px;background:#e9e9e9"></div>
<div style="position:absolute;left:984.0px;top:400px;width:1px;height:212.39999999999998px;background:#e9e9e9"></div>
<div style="position:absolute;left:1022.1px;top:400px;width:1px;height:212.39999999999998px;background:#e9e9e9"></div>
<div style="position:absolute;left:1060.2px;top:400px;width:1px;height:212.39999999999998px;background:#e9e9e9"></div>
<div style="position:absolute;left:1098.0px;top:400px;width:1px;height:212.39999999999998px;background:#e9e9e9"></div>
<div style="position:absolute;left:1136.1px;top:400px;width:1px;height:212.39999999999998px;background:#e9e9e9"></div>
<div style="position:absolute;left:1173.9px;top:400px;width:1px;height:212.39999999999998px;background:#e9e9e9"></div>
<div class="t si" style="left:644.5px;width:226.5px;text-align:center;top:403.24px;font-size:7.4px;color:#3c3c3c;letter-spacing:-0.3px">RANDOMIZED CHOICES</div>
<div class="t si" style="left:871px;width:151.60000000000002px;text-align:center;top:403.24px;font-size:7.4px;color:#3c3c3c;letter-spacing:-0.2px">Random Numbers</div>
<div class="t si" style="left:1022.6px;width:151.80000000000007px;text-align:center;top:403.24px;font-size:7.4px;color:#3c3c3c;">RANK</div>
<div class="t si" style="left:1176.8px;top:403.24px;font-size:7.4px;color:#3c3c3c;letter-spacing:-0.3px">RANDOM CONSTANT</div>
<div class="t si" style="left:73.1px;top:415.74px;font-size:7.4px;color:#3c3c3c;letter-spacing:-0.35px">QUESTIONS</div>
<div class="t si" style="left:266.8px;top:415.74px;font-size:7.4px;color:#3c3c3c;letter-spacing:-0.35px">CORRECT ANSWER</div>
<div class="t si" style="left:346.40000000000003px;top:415.74px;font-size:7.4px;color:#3c3c3c;letter-spacing:-0.35px">CHOICE 2</div>
<div class="t si" style="left:425.0px;top:415.74px;font-size:7.4px;color:#3c3c3c;letter-spacing:-0.35px">CHOICE 3</div>
<div class="t si" style="left:498.3px;top:415.74px;font-size:7.4px;color:#3c3c3c;letter-spacing:-0.35px">CHOICE 4</div>
<div class="t si" style="left:568.0999999999999px;top:415.74px;font-size:7.4px;color:#3c3c3c;letter-spacing:-0.35px">ANSWER KEY</div>
<div class="t si" style="left:646.3px;top:415.74px;font-size:7.4px;color:#3c3c3c;letter-spacing:-0.35px">A</div>
<div class="t si" style="left:712.8px;top:415.74px;font-size:7.4px;color:#3c3c3c;letter-spacing:-0.35px">B</div>
<div class="t si" style="left:761.5999999999999px;top:415.74px;font-size:7.4px;color:#3c3c3c;letter-spacing:-0.35px">C</div>
<div class="t si" style="left:816.3px;top:415.74px;font-size:7.4px;color:#3c3c3c;letter-spacing:-0.35px">D</div>
<div class="t si" style="left:1024.4px;top:415.74px;font-size:7.4px;color:#3c3c3c;letter-spacing:-0.35px">A</div>
<div class="t si" style="left:1062.5px;top:415.74px;font-size:7.4px;color:#3c3c3c;letter-spacing:-0.35px">B</div>
<div class="t si" style="left:1100.3px;top:415.74px;font-size:7.4px;color:#3c3c3c;letter-spacing:-0.35px">C</div>
<div class="t si" style="left:1138.3999999999999px;top:415.74px;font-size:7.4px;color:#3c3c3c;letter-spacing:-0.35px">D</div>
<div class="t si" style="right:1175px;top:437.37px;font-size:7.6px;color:#3c3c3c;">1</div>
<div class="t si" style="left:73.8px;top:437.37px;font-size:7.6px;color:#3c3c3c;width:190.7px;overflow:hidden;">Ratio of lateral strain to longitudinal strain</div>
<div class="t si" style="left:266.8px;top:437.37px;font-size:7.6px;color:#3c3c3c;">Poisson's Ratio</div>
<div class="t si" style="left:346.40000000000003px;top:437.37px;font-size:7.6px;color:#3c3c3c;">Poison's Ratio</div>
<div class="t si" style="left:425.0px;top:437.37px;font-size:7.6px;color:#3c3c3c;">Deformation Ratio</div>
<div class="t si" style="left:498.3px;top:437.37px;font-size:7.6px;color:#3c3c3c;">Strain Ratio</div>
<div class="t si" style="left:568.0999999999999px;top:437.37px;font-size:7.6px;color:#3c3c3c;width:75.90000000000009px;overflow:hidden;">Poisson's Ratio</div>
<div class="t si" style="left:646.3px;top:437.37px;font-size:7.6px;color:#3c3c3c;width:64.20000000000005px;overflow:hidden;">Strain Ratio</div>
<div class="t si" style="left:712.8px;top:437.37px;font-size:7.6px;color:#3c3c3c;width:46.5px;overflow:hidden;">Poisson's Ratio</div>
<div class="t si" style="left:761.5999999999999px;top:437.37px;font-size:7.6px;color:#3c3c3c;width:52.40000000000009px;overflow:hidden;">Poison's Ratio</div>
<div class="t si" style="left:816.3px;top:437.37px;font-size:7.6px;color:#3c3c3c;width:54.200000000000045px;overflow:hidden;">Deformation Ratio</div>
<div class="t si" style="right:337.5px;top:437.37px;font-size:7.6px;color:#3c3c3c;letter-spacing:-0.2px">0.053775</div>
<div class="t si" style="right:299.5px;top:437.37px;font-size:7.6px;color:#3c3c3c;letter-spacing:-0.2px">0.549595</div>
<div class="t si" style="right:262.0px;top:437.37px;font-size:7.6px;color:#3c3c3c;letter-spacing:-0.2px">0.247119</div>
<div class="t si" style="right:223.89999999999998px;top:437.37px;font-size:7.6px;color:#3c3c3c;letter-spacing:-0.2px">0.220654</div>
<div class="t si" style="right:186.29999999999995px;top:437.37px;font-size:7.6px;color:#3c3c3c;">4</div>
<div class="t si" style="right:148.5px;top:437.37px;font-size:7.6px;color:#3c3c3c;">1</div>
<div class="t si" style="right:110.40000000000009px;top:437.37px;font-size:7.6px;color:#3c3c3c;">2</div>
<div class="t si" style="right:72.59999999999991px;top:437.37px;font-size:7.6px;color:#3c3c3c;">3</div>
<div class="t si" style="right:1175px;top:475.57px;font-size:7.6px;color:#3c3c3c;">2</div>
<div class="t si" style="left:73.8px;top:451.77px;font-size:7.6px;color:#3c3c3c;width:190.7px;overflow:hidden;">The measure of a material's resistance to shearing</div>
<div class="t si" style="left:73.8px;top:463.67px;font-size:7.6px;color:#3c3c3c;width:190.7px;overflow:hidden;letter-spacing:-0.12px">deformation under an applied force, also known as the</div>
<div class="t si" style="left:73.8px;top:475.57px;font-size:7.6px;color:#3c3c3c;width:190.7px;overflow:hidden;">Shear Modulus</div>
<div class="t si" style="left:266.8px;top:475.57px;font-size:7.6px;color:#3c3c3c;">Modulus of Rigidity</div>
<div class="t si" style="left:346.40000000000003px;top:475.57px;font-size:7.6px;color:#3c3c3c;">Modulus of Rupture</div>
<div class="t si" style="left:425.0px;top:475.57px;font-size:7.6px;color:#3c3c3c;">Modulus of Elasticity</div>
<div class="t si" style="left:498.3px;top:463.67px;font-size:7.6px;color:#3c3c3c;">Modulus of</div>
<div class="t si" style="left:498.3px;top:475.57px;font-size:7.6px;color:#3c3c3c;">Ductility</div>
<div class="t si" style="left:568.0999999999999px;top:475.57px;font-size:7.6px;color:#3c3c3c;width:75.90000000000009px;overflow:hidden;">Modulus of Rigidity</div>
<div class="t si" style="left:646.3px;top:475.57px;font-size:7.6px;color:#3c3c3c;width:64.20000000000005px;overflow:hidden;">Modulus of Rupture</div>
<div class="t si" style="left:712.8px;top:475.57px;font-size:7.6px;color:#3c3c3c;width:46.5px;overflow:hidden;">Modulus of Elasticity</div>
<div class="t si" style="left:761.5999999999999px;top:475.57px;font-size:7.6px;color:#3c3c3c;width:52.40000000000009px;overflow:hidden;">Modulus of Rigidity</div>
<div class="t si" style="left:816.3px;top:475.57px;font-size:7.6px;color:#3c3c3c;width:54.200000000000045px;overflow:hidden;">Modulus of Ductility</div>
<div class="t si" style="right:337.5px;top:475.57px;font-size:7.6px;color:#3c3c3c;letter-spacing:-0.2px">0.775999</div>
<div class="t si" style="right:299.5px;top:475.57px;font-size:7.6px;color:#3c3c3c;letter-spacing:-0.2px">0.307114</div>
<div class="t si" style="right:262.0px;top:475.57px;font-size:7.6px;color:#3c3c3c;letter-spacing:-0.2px">0.830027</div>
<div class="t si" style="right:223.89999999999998px;top:475.57px;font-size:7.6px;color:#3c3c3c;letter-spacing:-0.2px">0.055788</div>
<div class="t si" style="right:186.29999999999995px;top:475.57px;font-size:7.6px;color:#3c3c3c;">2</div>
<div class="t si" style="right:148.5px;top:475.57px;font-size:7.6px;color:#3c3c3c;">3</div>
<div class="t si" style="right:110.40000000000009px;top:475.57px;font-size:7.6px;color:#3c3c3c;">1</div>
<div class="t si" style="right:72.59999999999991px;top:475.57px;font-size:7.6px;color:#3c3c3c;">4</div>
<div class="t si" style="right:1175px;top:504.57px;font-size:7.6px;color:#3c3c3c;">3</div>
<div class="t si" style="left:73.8px;top:492.67px;font-size:7.6px;color:#3c3c3c;width:190.7px;overflow:hidden;">It is developed on a body when the body is prevented</div>
<div class="t si" style="left:73.8px;top:504.57px;font-size:7.6px;color:#3c3c3c;width:190.7px;overflow:hidden;">from deforming due to temperature</div>
<div class="t si" style="left:266.8px;top:504.57px;font-size:7.6px;color:#3c3c3c;">Thermal Stress</div>
<div class="t si" style="left:346.40000000000003px;top:504.57px;font-size:7.6px;color:#3c3c3c;">Thermal Deformation</div>
<div class="t si" style="left:425.0px;top:504.57px;font-size:7.6px;color:#3c3c3c;">Thermal Expansion</div>
<div class="t si" style="left:498.3px;top:492.67px;font-size:7.6px;color:#3c3c3c;">Thermal</div>
<div class="t si" style="left:498.3px;top:504.57px;font-size:7.6px;color:#3c3c3c;">Contraction</div>
<div class="t si" style="left:568.0999999999999px;top:504.57px;font-size:7.6px;color:#3c3c3c;width:75.90000000000009px;overflow:hidden;">Thermal Stress</div>
<div class="t si" style="left:646.3px;top:504.57px;font-size:7.6px;color:#3c3c3c;width:64.20000000000005px;overflow:hidden;">Thermal Expansion</div>
<div class="t si" style="left:712.8px;top:504.57px;font-size:7.6px;color:#3c3c3c;width:46.5px;overflow:hidden;">Thermal Contraction</div>
<div class="t si" style="left:761.5999999999999px;top:504.57px;font-size:7.6px;color:#3c3c3c;width:52.40000000000009px;overflow:hidden;">Thermal Deformation</div>
<div class="t si" style="left:816.3px;top:504.57px;font-size:7.6px;color:#3c3c3c;width:54.200000000000045px;overflow:hidden;">Thermal Stress</div>
<div class="t si" style="right:337.5px;top:504.57px;font-size:7.6px;color:#3c3c3c;letter-spacing:-0.2px">0.794375</div>
<div class="t si" style="right:299.5px;top:504.57px;font-size:7.6px;color:#3c3c3c;letter-spacing:-0.2px">0.251552</div>
<div class="t si" style="right:262.0px;top:504.57px;font-size:7.6px;color:#3c3c3c;letter-spacing:-0.2px">0.917294</div>
<div class="t si" style="right:223.89999999999998px;top:504.57px;font-size:7.6px;color:#3c3c3c;letter-spacing:-0.2px">0.932388</div>
<div class="t si" style="right:186.29999999999995px;top:504.57px;font-size:7.6px;color:#3c3c3c;">3</div>
<div class="t si" style="right:148.5px;top:504.57px;font-size:7.6px;color:#3c3c3c;">4</div>
<div class="t si" style="right:110.40000000000009px;top:504.57px;font-size:7.6px;color:#3c3c3c;">2</div>
<div class="t si" style="right:72.59999999999991px;top:504.57px;font-size:7.6px;color:#3c3c3c;">1</div>
<div class="t si" style="right:1175px;top:573.37px;font-size:7.6px;color:#3c3c3c;">4</div>
<div class="t si" style="left:73.8px;top:537.67px;font-size:7.6px;color:#3c3c3c;width:190.7px;overflow:hidden;letter-spacing:-0.12px">A metal bar is 5m long at 25ºC. If the temperature rises</div>
<div class="t si" style="left:73.8px;top:549.57px;font-size:7.6px;color:#3c3c3c;width:190.7px;overflow:hidden;letter-spacing:-0.12px">to 122ºC, what is the stress on the bar (in MPa)? The bar</div>
<div class="t si" style="left:73.8px;top:561.47px;font-size:7.6px;color:#3c3c3c;width:190.7px;overflow:hidden;letter-spacing:-0.12px">has no restraints. Assume that the coefficient of thermal</div>
<div class="t si" style="left:73.8px;top:573.37px;font-size:7.6px;color:#3c3c3c;width:190.7px;overflow:hidden;">expansion is a=11.6x10^-6mm/mmºC and E=200GPa</div>
<div class="t si" style="left:266.8px;top:561.47px;font-size:7.6px;color:#3c3c3c;">225.04(Compressive</div>
<div class="t si" style="left:266.8px;top:573.37px;font-size:7.6px;color:#3c3c3c;">Stress)</div>
<div class="t si" style="left:346.40000000000003px;top:573.37px;font-size:7.6px;color:#3c3c3c;">225.04(Tensile Stress)</div>
<div class="t si" style="left:425.0px;top:561.47px;font-size:7.6px;color:#3c3c3c;">283.04(Compressiv</div>
<div class="t si" style="left:425.0px;top:573.37px;font-size:7.6px;color:#3c3c3c;">e Stress)</div>
<div class="t si" style="left:498.3px;top:561.47px;font-size:7.6px;color:#3c3c3c;">283.04(Tensile</div>
<div class="t si" style="left:498.3px;top:573.37px;font-size:7.6px;color:#3c3c3c;">Stress)</div>
<div class="t si" style="left:568.0999999999999px;top:573.37px;font-size:7.6px;color:#3c3c3c;width:75.90000000000009px;overflow:hidden;">225.04(Compressive Stress)</div>
<div class="t si" style="left:646.3px;top:573.37px;font-size:7.6px;color:#3c3c3c;width:64.20000000000005px;overflow:hidden;">283.04(Compressive Stress)</div>
<div class="t si" style="left:712.8px;top:573.37px;font-size:7.6px;color:#3c3c3c;width:46.5px;overflow:hidden;">283.04(Tensile Stress)</div>
<div class="t si" style="left:761.5999999999999px;top:573.37px;font-size:7.6px;color:#3c3c3c;width:52.40000000000009px;overflow:hidden;">225.04(Compressive Stress)</div>
<div class="t si" style="left:816.3px;top:573.37px;font-size:7.6px;color:#3c3c3c;width:54.200000000000045px;overflow:hidden;">225.04(Tensile Stress)</div>
<div class="t si" style="right:337.5px;top:573.37px;font-size:7.6px;color:#3c3c3c;letter-spacing:-0.2px">0.15266</div>
<div class="t si" style="right:299.5px;top:573.37px;font-size:7.6px;color:#3c3c3c;letter-spacing:-0.2px">0.080041</div>
<div class="t si" style="right:262.0px;top:573.37px;font-size:7.6px;color:#3c3c3c;letter-spacing:-0.2px">0.989963</div>
<div class="t si" style="right:223.89999999999998px;top:573.37px;font-size:7.6px;color:#3c3c3c;letter-spacing:-0.2px">0.797551</div>
<div class="t si" style="right:186.29999999999995px;top:573.37px;font-size:7.6px;color:#3c3c3c;">3</div>
<div class="t si" style="right:148.5px;top:573.37px;font-size:7.6px;color:#3c3c3c;">4</div>
<div class="t si" style="right:110.40000000000009px;top:573.37px;font-size:7.6px;color:#3c3c3c;">1</div>
<div class="t si" style="right:72.59999999999991px;top:573.37px;font-size:7.6px;color:#3c3c3c;">2</div>
<div class="t si" style="right:1175px;top:600.37px;font-size:7.6px;color:#3c3c3c;">5</div>
<div class="t si" style="left:73.8px;top:600.37px;font-size:7.6px;color:#3c3c3c;width:190.7px;overflow:hidden;letter-spacing:-0.12px">Materials whose properties are similar in all directions</div>
<div class="t si" style="left:266.8px;top:600.37px;font-size:7.6px;color:#3c3c3c;">Isotropic</div>
<div class="t si" style="left:346.40000000000003px;top:600.37px;font-size:7.6px;color:#3c3c3c;">Anisotropic</div>
<div class="t si" style="left:425.0px;top:600.37px;font-size:7.6px;color:#3c3c3c;">Ergonomic</div>
<div class="t si" style="left:498.3px;top:600.37px;font-size:7.6px;color:#3c3c3c;">Orthotropic</div>
<div class="t si" style="left:568.0999999999999px;top:600.37px;font-size:7.6px;color:#3c3c3c;width:75.90000000000009px;overflow:hidden;">Isotropic</div>
<div class="t si" style="left:646.3px;top:600.37px;font-size:7.6px;color:#3c3c3c;width:64.20000000000005px;overflow:hidden;">Orthotropic</div>
<div class="t si" style="left:712.8px;top:600.37px;font-size:7.6px;color:#3c3c3c;width:46.5px;overflow:hidden;">Ergonomic</div>
<div class="t si" style="left:761.5999999999999px;top:600.37px;font-size:7.6px;color:#3c3c3c;width:52.40000000000009px;overflow:hidden;">Isotropic</div>
<div class="t si" style="left:816.3px;top:600.37px;font-size:7.6px;color:#3c3c3c;width:54.200000000000045px;overflow:hidden;">Anisotropic</div>
<div class="t si" style="right:337.5px;top:600.37px;font-size:7.6px;color:#3c3c3c;letter-spacing:-0.2px">0.012401</div>
<div class="t si" style="right:299.5px;top:600.37px;font-size:7.6px;color:#3c3c3c;letter-spacing:-0.2px">0.330735</div>
<div class="t si" style="right:262.0px;top:600.37px;font-size:7.6px;color:#3c3c3c;letter-spacing:-0.2px">0.550999</div>
<div class="t si" style="right:223.89999999999998px;top:600.37px;font-size:7.6px;color:#3c3c3c;letter-spacing:-0.2px">0.487798</div>
<div class="t si" style="right:186.29999999999995px;top:600.37px;font-size:7.6px;color:#3c3c3c;">4</div>
<div class="t si" style="right:148.5px;top:600.37px;font-size:7.6px;color:#3c3c3c;">3</div>
<div class="t si" style="right:110.40000000000009px;top:600.37px;font-size:7.6px;color:#3c3c3c;">1</div>
<div class="t si" style="right:72.59999999999991px;top:600.37px;font-size:7.6px;color:#3c3c3c;">2</div>
</body></html>
